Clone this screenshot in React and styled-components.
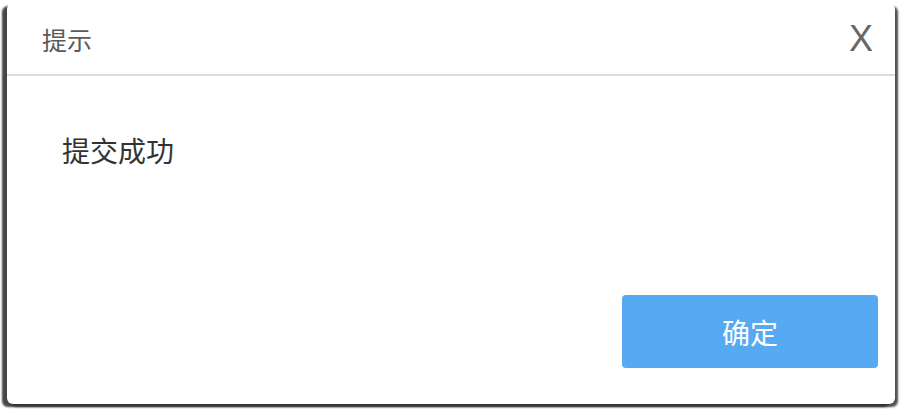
import React from "react";
import styled, { createGlobalStyle } from "styled-components";

const Global = createGlobalStyle`
  html, body { margin: 0; padding: 0; background: #ffffff; }
  body { font-family: "Microsoft YaHei", "Noto Sans CJK SC", "Liberation Sans", sans-serif; }
`;

const Page = styled.div`
  width: 903px;
  height: 410px;
  box-sizing: border-box;
  padding: 3px 8px 6px 7px;
  display: flex;
`;

const Dialog = styled.div`
  flex: 1;
  background: #fff;
  border-radius: 6px;
  box-shadow: -5px 3px 2px rgba(50, 50, 50, 0.9), 3px 3px 2px rgba(50, 50, 50, 0.85);
  display: flex;
  flex-direction: column;
  overflow: hidden;
`;

const Header = styled.div`
  height: 71px;
  border-bottom: 2px solid #dcdcdc;
  display: flex;
  align-items: center;
  justify-content: space-between;
  padding: 0 22px 0 35px;
`;

const Title = styled.div`
  font-size: 25px;
  color: #5a5a5a;
`;

const Close = styled.div`
  font-family: "Liberation Sans", sans-serif;
  font-size: 36px;
  color: #666;
  line-height: 1;
`;

const Body = styled.div`
  flex: 1;
  padding: 54px 0 0 55px;
  font-size: 28px;
  color: #333;
`;

const Footer = styled.div`
  display: flex;
  justify-content: flex-end;
  padding: 0 17px 36px 0;
`;

const Button = styled.button`
  width: 256px;
  height: 73px;
  border: none;
  border-radius: 4px;
  background: #55aaf2;
  color: #fff;
  font-family: inherit;
  font-size: 28px;
`;

export default function App() {
  return (
    <>
      <Global />
      <Page>
        <Dialog>
          <Header>
            <Title>提示</Title>
            <Close>X</Close>
          </Header>
          <Body>提交成功</Body>
          <Footer>
            <Button>确定</Button>
          </Footer>
        </Dialog>
      </Page>
    </>
  );
}
